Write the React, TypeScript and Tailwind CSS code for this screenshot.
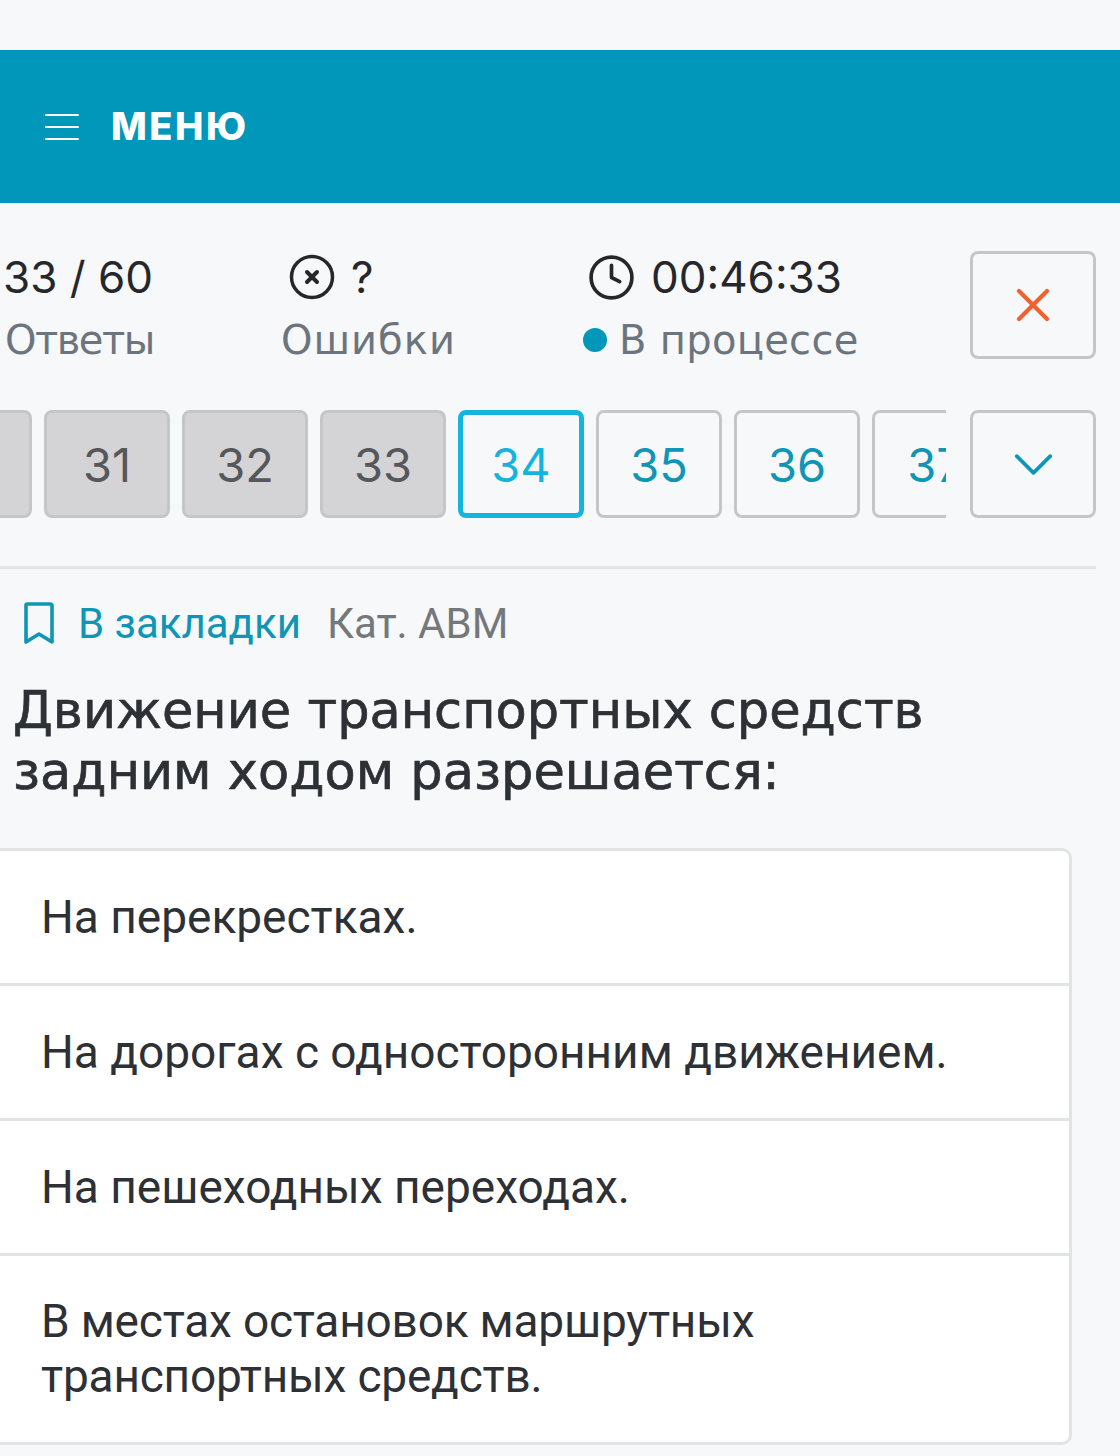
import React from 'react';
import { ChevronDown, Clock, X } from 'lucide-react';

const done = [30, 31, 32, 33];
const next = [35, 36, 37];
const answers = [
  'На перекрестках.',
  'На дорогах с односторонним движением.',
  'На пешеходных переходах.',
];

const tile = 'shrink-0 w-[126px] h-[108px] rounded-[8px] flex items-center justify-center pt-[3px] text-[47px]';
const label = "mt-[12px] text-[40px] text-[#6c757d] leading-[50px] font-['DejaVu_Sans',sans-serif]";

const App: React.FC = () => {
  return (
    <div className="w-[1120px] h-[1456px] overflow-hidden bg-[#f7f8fa] pt-[50px] font-['Inter',sans-serif]">
      {/* Header */}
      <div className="h-[153px] bg-[#0097ba] flex items-center pl-[45px] gap-[32px]">
        <div className="w-[34px] flex flex-col gap-[10px]">
          <div className="h-[2px] bg-white rounded-full" />
          <div className="h-[2px] bg-white rounded-full" />
          <div className="h-[2px] bg-white rounded-full" />
        </div>
        <span className="text-white text-[38px] font-extrabold tracking-[2.5px] leading-none -mt-[2px]">МЕНЮ</span>
      </div>

      {/* Stats */}
      <div className="flex items-start h-[108px] mt-[48px] pr-[24px]">
        <div className="w-[283px] pl-[5px] flex flex-col">
          <div className="h-[52px] flex items-center text-[44px] text-[#25272b] leading-none -ml-[2px]">33 / 60</div>
          <div className={`${label} tracking-[-1.5px]`}>Ответы</div>
        </div>
        <div className="w-[300px] flex flex-col">
          <div className="h-[52px] flex items-center gap-[16px] pl-[6px] text-[44px] text-[#25272b] leading-none">
            <svg width="46" height="46" viewBox="0 0 46 46" fill="none" stroke="#25272b" strokeLinecap="round">
              <circle cx="23" cy="23" r="20.5" strokeWidth="3.5" />
              <path d="M18 18 28 28M28 18 18 28" strokeWidth="4" />
            </svg>
            <span>?</span>
          </div>
          <div className={`${label} -ml-[2px] tracking-[1px]`}>Ошибки</div>
        </div>
        <div className="flex-1 flex flex-col">
          <div className="h-[52px] flex items-center gap-[15px] pl-[4px] text-[44px] text-[#25272b] leading-none">
            <Clock size={49} strokeWidth={1.8} color="#25272b" />
            <span>00:46:33</span>
          </div>
          <div className={`${label} flex items-center gap-[12px] tracking-[0.3px]`}>
            <span className="w-[24px] h-[24px] rounded-full bg-[#0097ba]" />
            В процессе
          </div>
        </div>
        <button className="shrink-0 w-[126px] h-[108px] rounded-[8px] border-[3px] border-[#c4c6c9] flex items-center justify-center">
          <X size={56} strokeWidth={1.8} color="#f4602c" />
        </button>
      </div>

      {/* Question numbers */}
      <div className="flex justify-between mt-[51px] pr-[24px]">
        <div className="w-[946px] overflow-hidden flex gap-[12px]">
          {done.map((n, i) => (
            <div key={n} className={`${tile} border-[3px] bg-[#d4d4d6] border-[#c4c6c9] text-[#55575a] ${i === 0 ? '-ml-[94px]' : ''}`}>{n}</div>
          ))}
          <div className={`${tile} border-[5px] border-[#14b5dc] text-[#14b5dc]`}>34</div>
          {next.map(n => (
            <div key={n} className={`${tile} border-[3px] border-[#c4c6c9] text-[#0f95b6]`}>{n}</div>
          ))}
        </div>
        <button className="shrink-0 w-[126px] h-[108px] rounded-[8px] border-[3px] border-[#c4c6c9] flex items-center justify-center">
          <ChevronDown size={67} strokeWidth={1.3} color="#0f95b6" />
        </button>
      </div>

      <div className="w-[1096px] h-[3px] bg-[#e3e5e8] mt-[48px]" />

      {/* Bookmark + category */}
      <div className="flex items-center h-[60px] mt-[24px] pl-[24px] text-[42px] font-['Roboto',sans-serif]">
        <svg width="32" height="43" viewBox="0 0 32 43" fill="none" stroke="#0f95b6" strokeWidth="3.6" strokeLinejoin="round">
          <path d="M2 3.5a1.5 1.5 0 0 1 1.5-1.5h23a1.5 1.5 0 0 1 1.5 1.5V40l-13-8-13 8z" />
        </svg>
        <span className="ml-[22px] text-[#0f95b6]">В закладки</span>
        <span className="ml-[26px] text-[#74787c]">Кат. АВМ</span>
      </div>

      {/* Question */}
      <h1 className="pl-[13px] mt-[27px] text-[51px] leading-[61px] font-normal text-[#2d3035] font-['DejaVu_Sans',sans-serif] [-webkit-text-stroke:0.7px_#2d3035]">
        Движение транспортных средств<br />задним ходом разрешается:
      </h1>

      {/* Answers */}
      <div className="w-[1072px] mt-[46px] rounded-r-[10px] bg-white border-y-[3px] border-r-[3px] border-[#e1e3e6] text-[46px] leading-[55px] text-[#2d3035] font-['Roboto',sans-serif]">
        {answers.map(a => (
          <div key={a} className="h-[135px] pl-[41px] flex items-center border-b-[3px] border-[#e1e3e6]">{a}</div>
        ))}
        <div className="h-[186px] pl-[41px] flex items-center tracking-[-0.2px]">
          <span>В местах остановок маршрутных<br />транспортных средств.</span>
        </div>
      </div>
    </div>
  );
};

export default App;
